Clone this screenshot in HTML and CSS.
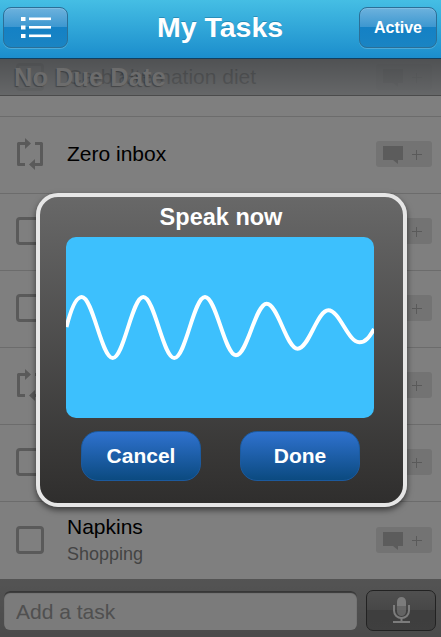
FILE: index.html
```html
<!DOCTYPE html>
<html lang="en">
<head>
    <meta charset="UTF-8">
    <meta name="viewport" content="width=device-width, initial-scale=1.0">
    <title>My Tasks</title>
    <link rel="stylesheet" href="styles.css">
</head>
<body>
    <div class="page">
        <div class="header">
            <button class="nav-btn menu-btn" aria-label="Menu">
                <svg width="30" height="21" viewBox="0 0 30 21">
                    <rect x="0" y="0" width="4.5" height="4" fill="#fff"/>
                    <rect x="0" y="8.5" width="4.5" height="4" fill="#fff"/>
                    <rect x="0" y="17" width="4.5" height="4" fill="#fff"/>
                    <rect x="8" y="0.5" width="22" height="2.6" fill="#fff"/>
                    <rect x="8" y="9" width="22" height="2.6" fill="#fff"/>
                    <rect x="8" y="17.5" width="22" height="2.6" fill="#fff"/>
                </svg>
            </button>
            <h1>My Tasks</h1>
            <button class="nav-btn active-btn">Active</button>
        </div>

        <div class="list">
            <div class="row">
                <span class="check"></span>
                <div class="task"><div class="name">Carb alternation diet</div></div>
                <span class="note">
                    <svg width="20" height="18" viewBox="0 0 20 18"><path d="M0 0H20V14H15L15 18L10 14H0Z" fill="#b8b8b8"/></svg>
                    <span class="plus"></span>
                </span>
            </div>
            <div class="row">
                <svg class="repeat" width="28" height="32" viewBox="0 0 28 32">
                    <path d="M10 5.5H2.5V26.5H9" fill="none" stroke="#b4b4b4" stroke-width="3" stroke-linejoin="round"/>
                    <path d="M9 0L15 5.5L9 11Z" fill="#b4b4b4"/>
                    <path d="M18 26.5H25.5V5.5H19" fill="none" stroke="#b4b4b4" stroke-width="3" stroke-linejoin="round"/>
                    <path d="M19 21L13 26.5L19 32Z" fill="#b4b4b4"/>
                </svg>
                <div class="task"><div class="name">Zero inbox</div></div>
                <span class="note">
                    <svg width="20" height="18" viewBox="0 0 20 18"><path d="M0 0H20V14H15L15 18L10 14H0Z" fill="#b8b8b8"/></svg>
                    <span class="plus"></span>
                </span>
            </div>
            <div class="row">
                <span class="check"></span>
                <div class="task"></div>
                <span class="note">
                    <svg width="20" height="18" viewBox="0 0 20 18"><path d="M0 0H20V14H15L15 18L10 14H0Z" fill="#b8b8b8"/></svg>
                    <span class="plus"></span>
                </span>
            </div>
            <div class="row">
                <span class="check"></span>
                <div class="task"></div>
                <span class="note">
                    <svg width="20" height="18" viewBox="0 0 20 18"><path d="M0 0H20V14H15L15 18L10 14H0Z" fill="#b8b8b8"/></svg>
                    <span class="plus"></span>
                </span>
            </div>
            <div class="row">
                <svg class="repeat" width="28" height="32" viewBox="0 0 28 32">
                    <path d="M10 5.5H2.5V26.5H9" fill="none" stroke="#b4b4b4" stroke-width="3" stroke-linejoin="round"/>
                    <path d="M9 0L15 5.5L9 11Z" fill="#b4b4b4"/>
                    <path d="M18 26.5H25.5V5.5H19" fill="none" stroke="#b4b4b4" stroke-width="3" stroke-linejoin="round"/>
                    <path d="M19 21L13 26.5L19 32Z" fill="#b4b4b4"/>
                </svg>
                <div class="task"></div>
                <span class="note">
                    <svg width="20" height="18" viewBox="0 0 20 18"><path d="M0 0H20V14H15L15 18L10 14H0Z" fill="#b8b8b8"/></svg>
                    <span class="plus"></span>
                </span>
            </div>
            <div class="row">
                <span class="check"></span>
                <div class="task"></div>
                <span class="note">
                    <svg width="20" height="18" viewBox="0 0 20 18"><path d="M0 0H20V14H15L15 18L10 14H0Z" fill="#b8b8b8"/></svg>
                    <span class="plus"></span>
                </span>
            </div>
            <div class="row last">
                <span class="check"></span>
                <div class="task">
                    <div class="name">Napkins</div>
                    <div class="sub">Shopping</div>
                </div>
                <span class="note">
                    <svg width="20" height="18" viewBox="0 0 20 18"><path d="M0 0H20V14H15L15 18L10 14H0Z" fill="#b8b8b8"/></svg>
                    <span class="plus"></span>
                </span>
            </div>
        </div>

        <div class="section-title">No Due Date</div>

        <div class="footer">
            <input class="add-task" type="text" placeholder="Add a task">
            <button class="mic-btn" aria-label="Speak">
                <svg width="17" height="26" viewBox="0 0 17 26">
                    <path d="M4 9V4.5C4 2 6 0 8.5 0C11 0 13 2 13 4.5V9Z" fill="#f8f8f8"/>
                    <path d="M4 9H13V14.5C13 17 11 19 8.5 19C6 19 4 17 4 14.5Z" fill="#f8f8f8" fill-opacity="0.6"/>
                    <path d="M1 8V13.5C1 18 4.5 21 8.5 21C12.5 21 16 18 16 13.5V8" fill="none" stroke="#f8f8f8" stroke-width="2"/>
                    <rect x="7.5" y="21" width="2" height="3" fill="#f8f8f8"/>
                    <rect x="0" y="24" width="17" height="2" fill="#f8f8f8"/>
                </svg>
            </button>
        </div>

        <div class="dim">
            <div class="dialog">
                <div class="dialog-title">Speak now</div>
                <div class="wave-panel">
                    <svg width="308" height="181" viewBox="0 0 308 181">
                        <path d="M0.5 90C4 76 9 60 15.7 60C27 60 35.4 121 46.7 121C58 121 66 60 77.3 60C88.6 60 97 121 108.3 121C119.6 121 127.7 60 139 60C150.3 60 158.7 118.3 170 118.3C181.3 118.3 189.4 66.7 200.7 66.7C212 66.7 220.4 111.7 231.7 111.7C243 111.7 251 73.3 262.3 73.3C273.6 73.3 282 105.3 293.3 105.3C300 105.3 304 99 308 92" fill="none" stroke="#fff" stroke-width="4"/>
                    </svg>
                </div>
                <div class="dialog-buttons">
                    <button class="dialog-btn">Cancel</button>
                    <button class="dialog-btn">Done</button>
                </div>
            </div>
        </div>
    </div>
</body>
</html>
```

FILE: styles.css
```css
* {
    box-sizing: border-box;
}

html, body {
    margin: 0;
    padding: 0;
}

body {
    font-family: "Liberation Sans", Arial, sans-serif;
    background-color: #808080;
}

.page {
    position: relative;
    display: flex;
    flex-direction: column;
    width: 441px;
    height: 637px;
    overflow: hidden;
    background-color: #ffffff;
}

/* top bar stays above the dimmed layer */
.header {
    position: relative;
    z-index: 3;
    display: grid;
    grid-template-columns: 1fr auto 1fr;
    align-items: center;
    flex: none;
    height: 59px;
    padding: 0 4px 3px 3px;
    background: linear-gradient(#45bee4, #1b8dcc);
    border-bottom: 1px solid #123f5e;
}

.header h1 {
    margin: 0;
    font-size: 28.5px;
    font-weight: bold;
    color: #ffffff;
    text-shadow: 0 -1px 0 rgba(0, 60, 100, 0.3);
}

.nav-btn {
    display: flex;
    align-items: center;
    justify-content: center;
    height: 41px;
    padding: 0;
    font-family: inherit;
    font-size: 16px;
    font-weight: bold;
    color: #ffffff;
    border: 1px solid #2b6f97;
    border-radius: 8px;
    background: linear-gradient(#6db2dd, #3c97d0 49%, #1481c5 50%, #1a84c3);
    box-shadow: inset 0 1px 0 rgba(255, 255, 255, 0.15), 0 1px 0 rgba(255, 255, 255, 0.2);
}

.menu-btn {
    justify-self: start;
    width: 65px;
}

.active-btn {
    justify-self: end;
    width: 78px;
}

.list {
    flex: 1;
    margin-top: -19px;
    min-height: 0;
}

.row {
    display: flex;
    align-items: center;
    height: 77px;
    padding: 0 9px 2px 16px;
    border-bottom: 1px solid #d8d8d8;
}

.row.last {
    border-bottom: none;
}

.check {
    flex: none;
    width: 28px;
    height: 28px;
    border: 3px solid #b4b4b4;
    border-radius: 4px;
}

.repeat {
    flex: none;
}

.task {
    flex: 1;
    margin-left: 23px;
}

.name {
    font-size: 21px;
    line-height: 26px;
    color: #000000;
}

.sub {
    margin-top: 3px;
    font-size: 18px;
    line-height: 22px;
    color: #888888;
}

.note {
    display: flex;
    align-items: center;
    gap: 9px;
    flex: none;
    width: 56px;
    height: 26px;
    padding: 2px 0 0 7px;
    background-color: #e6e6e6;
    border-radius: 3px;
}

.plus {
    position: relative;
    width: 10px;
    height: 10px;
    background:
        linear-gradient(#b4b4b4, #b4b4b4) center / 10px 1.4px no-repeat,
        linear-gradient(#b4b4b4, #b4b4b4) center / 1.4px 10px no-repeat;
}

/* sticky section label, the row under it shows through */
.section-title {
    position: absolute;
    top: 59px;
    left: 0;
    right: 0;
    height: 37px;
    padding-left: 14px;
    font-size: 25.5px;
    font-weight: bold;
    line-height: 36px;
    color: #d8d8d8;
    text-shadow: -1px 1px 1px rgba(0, 0, 0, 0.3);
    background: linear-gradient(rgba(147, 151, 155, 0.88), rgba(197, 200, 203, 0.88));
    border-bottom: 1px solid rgba(150, 150, 150, 0.9);
}

.footer {
    display: flex;
    align-items: center;
    gap: 9px;
    flex: none;
    height: 58px;
    padding: 4px 5px 0 4px;
    background: linear-gradient(#a8a8a8, #969696);
}

.add-task {
    flex: 1;
    min-width: 0;
    height: 39px;
    padding: 3px 12px 0;
    font-family: inherit;
    font-size: 21px;
    color: #000000;
    background-color: #f6f6f6;
    border: none;
    border-radius: 6px;
    box-shadow: inset 0 2px 1px rgba(0, 0, 0, 0.55);
}

.add-task::placeholder {
    color: #a0a0a0;
    opacity: 1;
}

.mic-btn {
    display: flex;
    align-items: center;
    justify-content: center;
    flex: none;
    width: 70px;
    height: 41px;
    padding: 0;
    border: 1px solid #444444;
    border-radius: 7px;
    background: linear-gradient(#a0a0a0, #8e8e8e 49%, #7c7c7c 50%, #7e7e7e);
}

.dim {
    position: absolute;
    top: 59px;
    left: 0;
    right: 0;
    bottom: 0;
    z-index: 2;
    padding: 134px 0 0 36px;
    background-color: rgba(0, 0, 0, 0.5);
}

.dialog {
    width: 371px;
    height: 314px;
    padding: 0 29px 0 26px;
    border: 4px solid #e6e6e6;
    border-radius: 22px;
    background: linear-gradient(#686868, #2f2e2d);
    box-shadow: 0 3px 6px rgba(0, 0, 0, 0.55);
}

.dialog-title {
    height: 40px;
    padding-left: 2px;
    font-size: 23.5px;
    font-weight: bold;
    line-height: 40px;
    text-align: center;
    color: #ffffff;
}

.wave-panel {
    height: 181px;
    overflow: hidden;
    background-color: #3dc0fd;
    border-radius: 10px;
}

.wave-panel svg {
    display: block;
}

.dialog-buttons {
    display: flex;
    gap: 39px;
    margin-top: 13px;
    padding-left: 15px;
}

.dialog-btn {
    width: 120px;
    height: 50px;
    padding: 0;
    font-family: inherit;
    font-size: 21px;
    font-weight: bold;
    color: #ffffff;
    border: 1px solid #1c5a9e;
    border-radius: 17px;
    background: linear-gradient(#2f72cf, #0b4a80);
}
```
